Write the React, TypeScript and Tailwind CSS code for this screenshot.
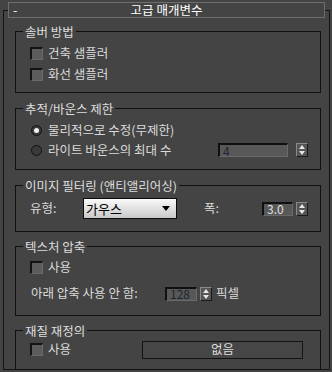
import type { ReactNode } from "react";

const font = "[font-family:'Noto_Sans_CJK_KR','Noto_Sans',sans-serif]";

function Checkbox() {
  return (
    <span className="box-border block h-[13px] w-[13px] shrink-0 border-t-2 border-l-2 border-r border-b border-t-[#141414] border-l-[#141414] border-r-[#6a6a6a] border-b-[#6a6a6a] bg-[#5c5c5c]" />
  );
}

function Radio({ checked = false }: { checked?: boolean }) {
  return (
    <span className="flex h-[11px] w-[11px] shrink-0 items-center justify-center rounded-full border border-[#121212] bg-[#3a3a3a]">
      {checked && <span className="block h-[5px] w-[5px] rounded-full bg-[#f2f2f2]" />}
    </span>
  );
}

function Spinner() {
  return (
    <span className="box-border flex h-[14px] w-[12px] shrink-0 flex-col items-center justify-center gap-[2px] border border-t-[#8a8a8a] border-l-[#8a8a8a] border-r-[#1a1a1a] border-b-[#1a1a1a] bg-[#555]">
      <svg width="6" height="4" viewBox="0 0 6 4">
        <path d="M3 0 L6 4 L0 4 Z" fill="#e6e6e6" />
      </svg>
      <svg width="6" height="4" viewBox="0 0 6 4">
        <path d="M0 0 L6 0 L3 4 Z" fill="#e6e6e6" />
      </svg>
    </span>
  );
}

function NumField({ value, w, light = false }: { value: string; w: string; light?: boolean }) {
  return (
    <span
      className={`box-border flex h-[14px] ${w} shrink-0 items-center border-t-2 border-l-2 border-r border-b border-t-[#101010] border-l-[#101010] border-r-[#6a6a6a] border-b-[#6a6a6a] bg-[#585858] pl-[3px] text-[12px] leading-none ${
        light ? "text-[#e0e0e0]" : "text-[#1c2633]"
      }`}
    >
      {value}
    </span>
  );
}

function Group({ title, h, children }: { title: string; h: string; children: ReactNode }) {
  return (
    <div className={`box-border ${h} border border-[#111]`}>
      <div className="-mt-[8px] ml-[7px] h-[15px] w-fit bg-[#444] px-[2px] text-[12.5px] leading-[15px] text-[#dedede]">
        {title}
      </div>
      {children}
    </div>
  );
}

export default function App() {
  return (
    <div className={`h-[372px] w-[332px] overflow-hidden bg-[#444] pt-[10px] ${font}`}>
      <div className="ml-[3px] box-border h-[360px] w-[327px] border border-[#141414]">
        <div className="mx-[4px] -mt-[9px] box-border flex h-[16px] items-center border border-[#6e6e6e] bg-[#444] px-[4px] text-[12.5px] leading-none text-white">
          <span className="w-[10px]">-</span>
          <span className="flex-1 pr-[10px] text-center">고급 매개변수</span>
        </div>

        <div className="mt-[13px] ml-[11px] flex w-[306px] flex-col gap-[14px] text-[12.5px] text-[#dadada]">
          <Group title="솔버 방법" h="h-[62px]">
            <div className="mt-[4px] flex flex-col pl-[14px]">
              <div className="flex h-[21px] items-center gap-[5px]">
                <Checkbox />
                <span>건축 샘플러</span>
              </div>
              <div className="flex h-[21px] items-center gap-[5px]">
                <Checkbox />
                <span>화선 샘플러</span>
              </div>
            </div>
          </Group>

          <Group title="추적/바운스 제한" h="h-[62px] mt-[1px]">
            <div className="mt-[4px] flex flex-col pl-[15px]">
              <div className="flex h-[20px] items-center gap-[6px]">
                <Radio checked />
                <span>물리적으로 수정(무제한)</span>
              </div>
              <div className="flex h-[20px] items-center gap-[6px]">
                <Radio />
                <span className="flex-1">라이트 바운스의 최대 수</span>
                <NumField value="4" w="w-[70px]" />
                <span className="mr-[12px] ml-[2px]">
                  <Spinner />
                </span>
              </div>
            </div>
          </Group>

          <Group title="이미지 필터링 (앤티앨리어싱)" h="h-[47px] mt-[1px]">
            <div className="mt-[5px] flex h-[21px] items-center pl-[14px]">
              <span className="w-[53px]">유형:</span>
              <span className="box-border flex h-[21px] w-[94px] items-center justify-between border border-[#0c0c0c] bg-gradient-to-b from-[#fafafa] to-[#c9c9c9] pl-[2px] pr-[6px] text-[13px] text-black">
                <span>가우스</span>
                <svg width="8" height="5" viewBox="0 0 8 5">
                  <path d="M0 0 L8 0 L4 5 Z" fill="#000" />
                </svg>
              </span>
              <span className="ml-[27px] w-[58px]">폭:</span>
              <NumField value="3.0" w="w-[31px]" light />
              <span className="ml-[3px]">
                <Spinner />
              </span>
            </div>
          </Group>

          <Group title="텍스처 압축" h="h-[70px]">
            <div className="mt-[3px] flex flex-col pl-[14px]">
              <div className="flex h-[21px] items-center gap-[5px]">
                <Checkbox />
                <span>사용</span>
              </div>
              <div className="mt-[5px] flex h-[21px] items-center">
                <span className="w-[135px] pl-[1px]">아래 압축 사용 안 함:</span>
                <NumField value="128" w="w-[32px]" />
                <span className="ml-[3px]">
                  <Spinner />
                </span>
                <span className="ml-[4px]">픽셀</span>
              </div>
            </div>
          </Group>

          <Group title="재질 재정의" h="h-[40px]">
            <div className="mt-[1px] flex h-[21px] items-center pl-[14px]">
              <Checkbox />
              <span className="ml-[5px] w-[94px]">사용</span>
              <span className="box-border flex h-[18px] w-[161px] items-center justify-center border border-[#141414] bg-[#464646] text-[#dcdcdc]">
                없음
              </span>
            </div>
          </Group>
        </div>
      </div>
    </div>
  );
}
